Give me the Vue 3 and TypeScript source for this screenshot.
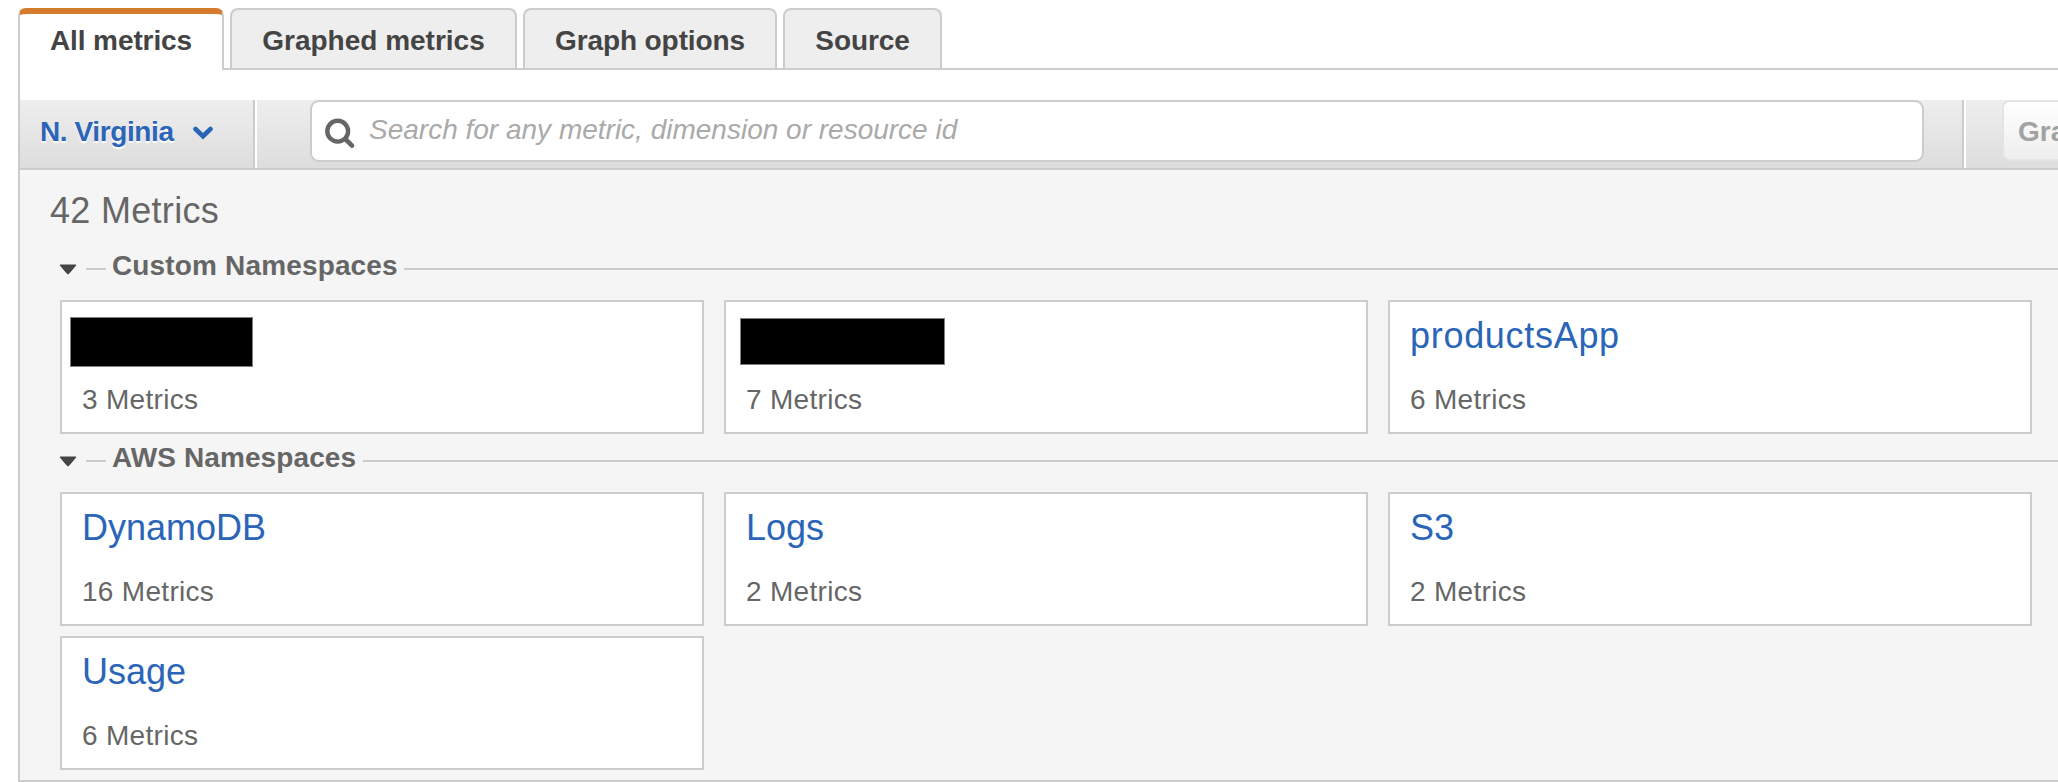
<script setup lang="ts">
interface Namespace {
  name: string
  count: number
  mask?: string
  wide?: boolean
}

interface Section {
  key: string
  title: string
  items: Namespace[]
}

const tabs: { key: string; label: string }[] = [
  { key: 'all', label: 'All metrics' },
  { key: 'graphed', label: 'Graphed metrics' },
  { key: 'options', label: 'Graph options' },
  { key: 'source', label: 'Source' },
]
const activeTab = 'all'

const sections: Section[] = [
  {
    key: 'custom',
    title: 'Custom Namespaces',
    items: [
      { name: '', count: 3, mask: 'mask-a' },
      { name: '', count: 7, mask: 'mask-b' },
      { name: 'productsApp', count: 6, wide: true },
    ],
  },
  {
    key: 'aws',
    title: 'AWS Namespaces',
    items: [
      { name: 'DynamoDB', count: 16 },
      { name: 'Logs', count: 2 },
      { name: 'S3', count: 2 },
      { name: 'Usage', count: 6 },
    ],
  },
]
</script>

<template>
  <div class="page">
    <nav class="tabs">
      <div
        v-for="tab in tabs"
        :key="tab.key"
        class="tab"
        :class="['tab-' + tab.key, { active: tab.key === activeTab }]"
      >
        <span>{{ tab.label }}</span>
      </div>
    </nav>

    <main class="panel">
      <div class="toolbar">
        <div class="region">
          <span class="region-name">N. Virginia</span>
          <svg class="chevron" width="20" height="14" viewBox="0 0 20 14">
            <path d="M2.5 3 L10 10.2 L17.5 3" />
          </svg>
        </div>
        <div class="search-cell">
          <div class="search">
            <svg class="lens" width="32" height="32" viewBox="0 0 32 32">
              <circle cx="13.7" cy="13.2" r="10.4" stroke-width="4.4" />
              <path d="M21.3 21 L28 27.7" stroke-width="4.6" />
            </svg>
            <span class="placeholder">Search for any metric, dimension or resource id</span>
          </div>
        </div>
        <div class="action-cell">
          <div class="graph-button"><span>Graph search</span></div>
        </div>
      </div>

      <h1 class="total">42 Metrics</h1>

      <section v-for="section in sections" :key="section.key" class="section" :class="section.key">
        <div class="section-head">
          <svg class="caret" width="18" height="12" viewBox="0 0 18 12">
            <path d="M1 1 H17 L9.8 9.6 Q9 10.4 8.2 9.6 Z" />
          </svg>
          <i class="rule-short"></i>
          <h2>{{ section.title }}</h2>
          <i class="rule-long"></i>
        </div>
        <div class="cards">
          <article v-for="(item, i) in section.items" :key="i" class="card">
            <div class="card-name">
              <div v-if="item.mask" class="mask" :class="item.mask"></div>
              <a v-else :class="{ wide: item.wide }">{{ item.name }}</a>
            </div>
            <div class="card-count">{{ item.count }} Metrics</div>
          </article>
        </div>
      </section>
    </main>
  </div>
</template>

<style>
html,
body {
  margin: 0;
  background: #fff;
  overflow: hidden;
}
</style>

<style scoped>
.page {
  box-sizing: border-box;
  width: 2058px;
  height: 782px;
  padding: 8px 0 0 18px;
  overflow: hidden;
  background: #fff;
  color: #666;
  font-family: 'Liberation Sans', Arial, Helvetica, sans-serif;
  font-size: 28px;
  line-height: 32px;
}

.page * {
  box-sizing: border-box;
}

.tabs {
  display: flex;
  gap: 6px;
  height: 62px;
  border-bottom: 2px solid #ccc;
}

.tab {
  height: 60px;
  padding-top: 15px;
  border: 2px solid #ccc;
  border-bottom: 0;
  border-radius: 8px 8px 0 0;
  background: #eee;
  color: #444;
  font-weight: bold;
  text-align: center;
  white-space: nowrap;
}

.tab.active {
  height: 62px;
  padding-top: 11px;
  border-top: 6px solid #d47b2c;
  background: #fff;
}

.tab-all {
  width: 206px;
  letter-spacing: -0.1px;
}

.tab-graphed {
  width: 287px;
}

.tab-options {
  width: 254px;
  letter-spacing: -0.1px;
}

.tab-source {
  width: 159px;
  letter-spacing: -0.1px;
}

.panel {
  height: 712px;
  padding-top: 30px;
  border-left: 2px solid #ccc;
  border-bottom: 2px solid #ccc;
  background: linear-gradient(#fff 30px, #f5f5f5 30px);
}

.toolbar {
  display: flex;
  height: 70px;
  border-bottom: 2px solid #ccc;
  background: linear-gradient(#eee, #ddd);
}

.region {
  display: flex;
  width: 235px;
  padding: 16px 0 0 20px;
  border-right: 2px solid #ccc;
  color: #2a65b8;
  font-weight: bold;
  text-shadow: 0 2px 1px #fff;
}

.region-name {
  width: 134px;
  letter-spacing: -0.4px;
  white-space: nowrap;
}

.chevron {
  margin: 10px 0 0 19px;
  fill: none;
  stroke: #2a65b8;
  stroke-width: 4.6;
  stroke-linecap: round;
}

.search-cell {
  width: 1709px;
  padding-left: 53px;
  border-left: 2px solid #fff;
  border-right: 2px solid #ccc;
}

.search {
  display: flex;
  width: 1614px;
  height: 62px;
  padding-left: 12px;
  border: 2px solid #ccc;
  border-radius: 9px;
  background: #fff;
}

.lens {
  margin-top: 16px;
  fill: none;
  stroke: #666;
  stroke-linecap: round;
}

.placeholder {
  margin: 12px 0 0 13px;
  color: #aaa;
  font-style: italic;
  white-space: nowrap;
}

.action-cell {
  flex: 1;
  padding-left: 36px;
  border-left: 2px solid #fff;
  overflow: hidden;
}

.graph-button {
  width: 200px;
  height: 61px;
  padding: 14px 0 0 14px;
  border: 2px solid #e4e4e4;
  border-radius: 8px;
  background: linear-gradient(#fff, #eee);
  color: #a2a2a2;
  font-weight: bold;
  white-space: nowrap;
}

.total {
  height: 40px;
  margin: 21px 0 0 30px;
  font-size: 36px;
  font-weight: normal;
  line-height: 40px;
  letter-spacing: 0.3px;
}

.section {
  padding-left: 40px;
}

.section-head {
  display: flex;
  height: 36px;
  margin-left: -1px;
}

.custom .section-head {
  margin-top: 19px;
}

.aws .section-head {
  margin-top: 8px;
}

.section-head h2 {
  margin: 0 0 0 6px;
  font-size: 28px;
  line-height: 32px;
  white-space: nowrap;
}

.custom h2 {
  width: 286px;
  letter-spacing: 0.15px;
}

.aws h2 {
  width: 245px;
  letter-spacing: 0.1px;
}

.caret {
  margin-top: 14px;
  fill: #444;
  stroke: #444;
  stroke-width: 1;
  stroke-linejoin: round;
}

.rule-short {
  width: 20px;
  height: 2px;
  margin: 18px 0 0 9px;
  background: #ccc;
}

.rule-long {
  flex: 1;
  height: 2px;
  margin: 18px 0 0 6px;
  background: #ccc;
}

.cards {
  display: grid;
  grid-template-columns: repeat(3, 644px);
  grid-auto-rows: 134px;
  gap: 10px 20px;
  padding-top: 14px;
}

.card {
  padding: 14px 0 0 20px;
  border: 2px solid #ccc;
  background: #fff;
}

.card-name {
  height: 40px;
  color: #2a65b8;
  font-size: 36px;
  line-height: 40px;
}

.wide {
  letter-spacing: 0.7px;
}

.card-count {
  margin-top: 28px;
  letter-spacing: 0.3px;
}

.mask {
  background: #000;
  border: 1px solid #808080;
}

.mask-a {
  position: relative;
  top: 1px;
  left: -12px;
  width: 183px;
  height: 50px;
}

.mask-b {
  position: relative;
  top: 2px;
  left: -6px;
  width: 205px;
  height: 47px;
}
</style>
